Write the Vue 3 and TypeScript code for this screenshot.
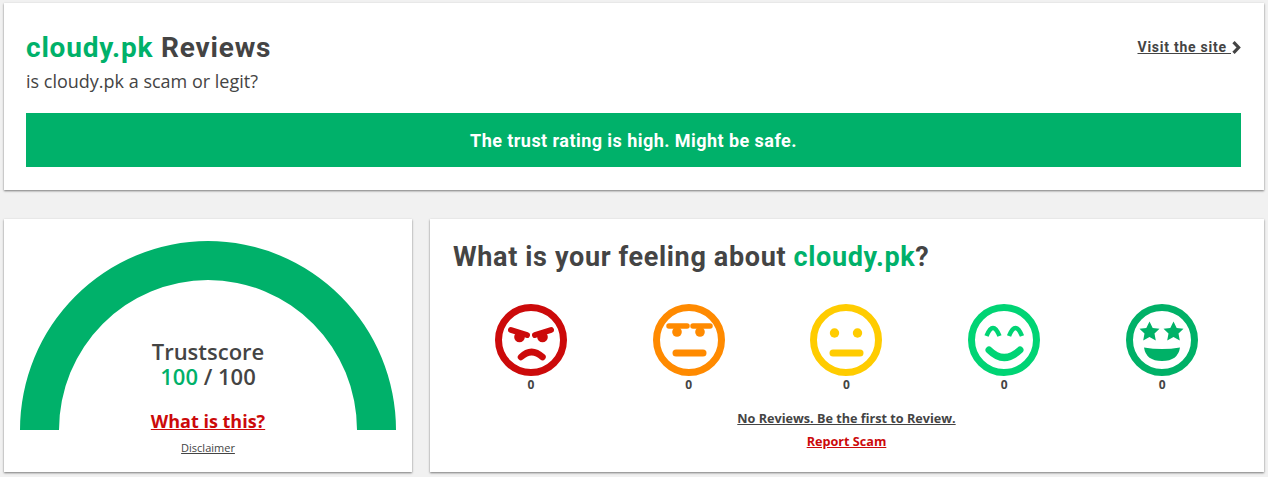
<script setup lang="ts">
const domain = 'cloudy.pk'
const faces = ['angry', 'annoyed', 'neutral', 'happy', 'stars']
const colors: Record<string, string> = {
  angry: '#cc0a0a',
  annoyed: '#ff8a00',
  neutral: '#ffcc00',
  happy: '#00d474',
  stars: '#00b167',
}
const star = 'M0 -10 L3.2 -3.6 L10 -2.8 L5 2 L6.3 9 L0 5.6 L-6.3 9 L-5 2 L-10 -2.8 L-3.2 -3.6 Z'
</script>

<template>
  <div class="page">
    <section class="card top">
      <div class="top-head">
        <div>
          <h1><span class="green">{{ domain }}</span> Reviews</h1>
          <p class="sub">is {{ domain }} a scam or legit?</p>
        </div>
        <div class="visit">
          <a href="#">Visit the site </a>
          <svg width="9" height="13" viewBox="0 0 9 13">
            <path d="M1.5 1.2 L6.6 6.5 L1.5 11.8" fill="none" stroke="#444" stroke-width="3.2" />
          </svg>
        </div>
      </div>
      <div class="banner">The trust rating is high. Might be safe.</div>
    </section>

    <div class="bottom">
      <section class="card score">
        <div class="gauge">
          <svg width="376" height="190" viewBox="0 0 376 190">
            <path d="M0 190 A188 189 0 0 1 376 190 L337 190 A149 150 0 0 0 39 190 Z" fill="#00b16a" />
          </svg>
          <div class="score-text">
            <div>Trustscore</div>
            <div><span class="green">100</span> / 100</div>
          </div>
          <a class="what" href="#">What is this?</a>
        </div>
        <a class="disclaimer" href="#">Disclaimer</a>
      </section>

      <section class="card feeling">
        <h2>What is your feeling about <span class="green">{{ domain }}</span>?</h2>
        <div class="faces">
          <div v-for="f in faces" :key="f" class="face">
            <svg width="72" height="72" viewBox="0 0 72 72" :style="{ color: colors[f] }">
              <circle cx="36" cy="36" r="32.5" fill="none" stroke="currentColor" stroke-width="7" />
              <g v-if="f === 'angry'">
                <path d="M16 26 L32 31 M56 26 L40 31" stroke="currentColor" stroke-width="6" stroke-linecap="round" />
                <circle cx="24.5" cy="33" r="5.3" fill="currentColor" />
                <circle cx="47.5" cy="33" r="5.3" fill="currentColor" />
                <path d="M26 53 Q36.5 43 47.5 53" fill="none" stroke="currentColor" stroke-width="6.5" stroke-linecap="round" />
              </g>
              <g v-else-if="f === 'annoyed'">
                <path d="M16 22 H34 M40 22 H57" stroke="currentColor" stroke-width="5.5" stroke-linecap="round" />
                <circle cx="24" cy="28" r="4.8" fill="currentColor" />
                <circle cx="47" cy="28" r="4.8" fill="currentColor" />
                <path d="M23 49 H50" stroke="currentColor" stroke-width="7" stroke-linecap="round" />
              </g>
              <g v-else-if="f === 'neutral'">
                <circle cx="24.5" cy="29" r="4.7" fill="currentColor" />
                <circle cx="47.5" cy="29" r="4.7" fill="currentColor" />
                <path d="M23 49 H50" stroke="currentColor" stroke-width="7" stroke-linecap="round" />
              </g>
              <g v-else-if="f === 'happy'">
                <path d="M18.5 32 Q25 16 31.5 32 M41 32 Q47.5 16 54 32" fill="none" stroke="currentColor" stroke-width="4.5" />
                <path d="M21 46 Q36 61 52 46" fill="none" stroke="currentColor" stroke-width="7" stroke-linecap="round" />
              </g>
              <g v-else>
                <path :d="star" fill="currentColor" transform="translate(23.5 27.5)" />
                <path :d="star" fill="currentColor" transform="translate(47.5 27.5)" />
                <path d="M18 43.5 Q36 46.5 54 43.5 Q52 57 36 57 Q20 57 18 43.5 Z" fill="currentColor" />
              </g>
            </svg>
            <span class="count">0</span>
          </div>
        </div>
        <a class="no-reviews" href="#">No Reviews. Be the first to Review.</a>
        <a class="report" href="#">Report Scam</a>
      </section>
    </div>
  </div>
</template>

<style scoped>
.page {
  width: 1268px;
  height: 477px;
  box-sizing: border-box;
  padding: 3px 4px 0;
  font-family: "Open Sans", sans-serif;
  color: #444;
  overflow: hidden;
}

.card {
  background: #fff;
  box-shadow: 0 1px 2px rgba(0, 0, 0, 0.5);
  box-sizing: border-box;
}

.green {
  color: #00b16a;
}

.top {
  height: 187px;
  padding: 28px 23px 0 22px;
}

.top-head {
  display: flex;
  justify-content: space-between;
  align-items: flex-start;
  height: 82px;
}

h1 {
  margin: 0;
  font-family: Roboto, sans-serif;
  font-size: 28px;
  line-height: 34px;
  font-weight: 700;
  letter-spacing: 0.8px;
}

.sub {
  margin: 3px 0 0;
  font-size: 18px;
  line-height: 26px;
}

.visit {
  display: flex;
  align-items: center;
  gap: 1px;
  margin-top: 8px;
  font-family: Roboto, sans-serif;
  font-size: 14px;
  font-weight: 700;
  letter-spacing: 0.75px;
}

.visit a {
  color: #444;
  white-space: pre;
}

.banner {
  height: 54px;
  background: #00b16a;
  color: #fff;
  display: flex;
  align-items: center;
  justify-content: center;
  font-family: Roboto, sans-serif;
  font-size: 18px;
  font-weight: 700;
  letter-spacing: 0.45px;
}

.bottom {
  display: flex;
  gap: 18px;
  margin-top: 29px;
}

.score {
  width: 408px;
  height: 253px;
  padding-top: 21px;
  text-align: center;
}

.gauge {
  position: relative;
  width: 376px;
  height: 190px;
  margin: 0 auto;
}

.gauge svg {
  display: block;
}

.score-text {
  position: absolute;
  left: 0;
  right: 0;
  top: 99px;
  font-size: 22px;
  line-height: 25px;
  font-weight: 600;
}

.what {
  position: absolute;
  left: 0;
  right: 0;
  top: 168px;
  font-size: 18px;
  line-height: 26px;
  font-weight: 700;
  color: #cc0a0a;
}

.disclaimer {
  display: inline-block;
  margin-top: 10px;
  font-size: 11px;
  line-height: 16px;
  color: #444;
}

.feeling {
  width: 834px;
  height: 253px;
  padding: 20px 23px 0 22px;
  text-align: center;
}

h2 {
  margin: 0 0 0 1px;
  text-align: left;
  font-family: Roboto, sans-serif;
  font-size: 27px;
  line-height: 36px;
  font-weight: 700;
  letter-spacing: 0.65px;
}

.faces {
  display: grid;
  grid-template-columns: repeat(5, 1fr);
  margin-top: 29px;
}

.face {
  display: flex;
  flex-direction: column;
  align-items: center;
}

.count {
  font-size: 12px;
  line-height: 18px;
  font-weight: 700;
}

.no-reviews {
  display: block;
  margin-top: 15px;
  font-size: 12.65px;
  line-height: 18px;
  font-weight: 700;
  color: #444;
}

.report {
  display: block;
  margin-top: 5px;
  font-size: 12.65px;
  line-height: 18px;
  font-weight: 700;
  color: #cc0a0a;
}
</style>

<style>
html, body {
  background: #f1f1f1;
}
</style>
